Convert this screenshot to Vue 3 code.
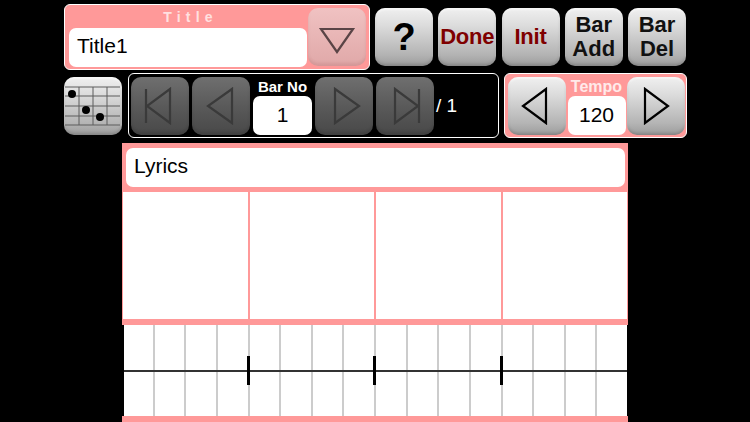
<template>
  <div class="screen">
    <div class="row row-top">
      <div class="title-panel">
        <div class="title-left">
          <div class="title-label">Title</div>
          <div class="field title-field">Title1</div>
        </div>
        <button class="btn btn-pink">
          <svg width="58" height="58" viewBox="0 0 58 58"><path d="M13 21 H45 L29 44 Z" class="tri dim" /></svg>
        </button>
      </div>
      <div class="actions">
        <button class="btn help">?</button>
        <button class="btn red">Done</button>
        <button class="btn red init">Init</button>
        <button class="btn two">Bar<br />Add</button>
        <button class="btn two">Bar<br />Del</button>
      </div>
    </div>

    <div class="row row-second">
      <button class="btn chord">
        <svg width="58" height="58" viewBox="0 0 58 58">
          <path v-for="y in chordRows" :key="y" :d="`M1 ${y} H56`" class="fret" />
          <path v-for="x in chordCols" :key="x" :d="`M${x} 10 V48`" class="fret" />
          <circle cx="8" cy="17" r="4" />
          <circle cx="22" cy="33" r="4" />
          <circle cx="36" cy="40" r="4" />
        </svg>
      </button>
      <div class="nav-panel">
        <button class="btn off">
          <svg width="58" height="58" viewBox="0 0 58 58"><path d="M15 12 V46 M39 12 V46 L16 29 Z" class="tri" /></svg>
        </button>
        <button class="btn off">
          <svg width="58" height="58" viewBox="0 0 58 58"><path d="M40 12 V46 L16 29 Z" class="tri" /></svg>
        </button>
        <div class="bar-no">
          <div class="small-label">Bar No</div>
          <div class="field num">1</div>
        </div>
        <button class="btn off">
          <svg width="58" height="58" viewBox="0 0 58 58"><path d="M20 12 V46 L44 29 Z" class="tri" /></svg>
        </button>
        <button class="btn off">
          <svg width="58" height="58" viewBox="0 0 58 58"><path d="M19 12 V46 L42 29 Z M43 12 V46" class="tri" /></svg>
        </button>
        <span class="total">/ 1</span>
      </div>
      <div class="tempo-panel">
        <button class="btn">
          <svg width="58" height="58" viewBox="0 0 58 58"><path d="M38 12 V46 L15 29 Z" class="tri dark" /></svg>
        </button>
        <div class="bar-no tempo">
          <div class="small-label">Tempo</div>
          <div class="field num">120</div>
        </div>
        <button class="btn">
          <svg width="58" height="58" viewBox="0 0 58 58"><path d="M18 12 V46 L41 29 Z" class="tri dark" /></svg>
        </button>
      </div>
    </div>

    <div class="sheet">
      <div class="lyrics-band">
        <div class="field lyrics">Lyrics</div>
      </div>
      <div class="cells">
        <div v-for="n in 4" :key="n" class="cell"></div>
      </div>
      <div class="staff">
        <div v-for="n in 16" :key="n" class="beat" :class="{ bar: n % 4 === 0 && n < 16 }"></div>
        <div class="mid-line"></div>
      </div>
    </div>
  </div>
</template>

<script setup>
const chordRows = [10, 19, 29, 39, 48]
const chordCols = [15, 29, 43]
</script>

<style>
html, body { margin: 0; background: #000; }
</style>

<style scoped>
.screen {
  width: 750px;
  height: 422px;
  overflow: hidden;
  background: #000;
  font-family: "Liberation Sans", Arial, sans-serif;
  padding-top: 4px;
  box-sizing: border-box;
}
.row {
  display: flex;
  margin-left: 64px;
}
.row-top { height: 66px; }
.row-second { height: 65px; margin-top: 3px; align-items: flex-start; }

.btn {
  width: 58px;
  height: 58px;
  flex: none;
  padding: 0;
  border: none;
  border-radius: 10px;
  background: linear-gradient(180deg, #f0f0f0 0%, #dcdcdc 30%, #b4b4b4 80%, #9c9c9c 100%);
  box-shadow: inset 0 -2px 3px rgba(0, 0, 0, 0.15), inset 0 2px 2px rgba(255, 255, 255, 0.5);
  font-family: inherit;
  font-weight: bold;
  color: #000;
  display: flex;
  align-items: center;
  justify-content: center;
}
.field {
  background: #fff;
  border-radius: 7px;
  color: #000;
  box-sizing: border-box;
}
.tri {
  fill: none;
  stroke: #3a3a3a;
  stroke-width: 2.2;
}
.tri.dim { stroke: #5a4446; }
.tri.dark { stroke: #000; }

.title-panel {
  width: 306px;
  height: 66px;
  box-sizing: border-box;
  background: #ff9999;
  border: 1px solid #fff;
  border-radius: 6px;
  display: flex;
  padding: 3px 3px 3px 4px;
  gap: 1px;
}
.title-left { width: 238px; }
.title-label {
  height: 20px;
  line-height: 18px;
  text-align: center;
  color: #ffe0e0;
  font-size: 14px;
  font-weight: bold;
  letter-spacing: 5.2px;
  padding-left: 5px;
}
.title-field {
  height: 39px;
  line-height: 36px;
  padding-left: 8px;
  font-size: 21px;
}
.btn-pink {
  background: linear-gradient(180deg, #f0c2c2 0%, #e0a8a8 100%);
  box-shadow: inset 0 -3px 3px rgba(120, 40, 40, 0.12);
}

.actions {
  display: flex;
  gap: 5.25px;
  margin-left: 5px;
  padding-top: 4px;
}
.help { font-size: 38px; }
.red { font-size: 22px; color: #7f0000; letter-spacing: -0.2px; }
.two { font-size: 22px; line-height: 24px; font-weight: bold; color: #111; }

.chord { margin-top: 4px; position: relative; }
.chord circle { fill: #000; }
.fret { stroke: #5c5c5c; stroke-width: 1; fill: none; }

.nav-panel {
  width: 371px;
  height: 65px;
  box-sizing: border-box;
  margin-left: 6px;
  border: 1px solid #fff;
  border-radius: 6px;
  display: flex;
  align-items: center;
  padding-left: 2px;
  gap: 3px;
}
.off {
  background: linear-gradient(180deg, #6f6f6f 0%, #5a5a5a 50%, #484848 100%);
  box-shadow: inset 0 -3px 3px rgba(0, 0, 0, 0.12);
}
.bar-no {
  width: 59px;
  height: 58px;
  display: flex;
  flex-direction: column;
  align-items: center;
}
.small-label {
  height: 19px;
  line-height: 19px;
  font-size: 15px;
  font-weight: bold;
  color: #fff;
}
.num {
  width: 59px;
  height: 39px;
  line-height: 38px;
  text-align: center;
  font-size: 21px;
}
.total {
  color: #fff;
  font-size: 19px;
  margin-left: -1px;
}

.tempo-panel {
  width: 183px;
  height: 65px;
  box-sizing: border-box;
  margin-left: 5px;
  background: #ff9999;
  border: 1px solid #fff;
  border-radius: 6px;
  display: flex;
  align-items: center;
  padding-left: 3px;
  gap: 1px;
}
.tempo .small-label { color: #ffeaea; font-size: 16px; }
.tempo { width: 59px; }
.tempo .num { width: 58px; }

.sheet {
  width: 506px;
  margin: 5px 0 0 122px;
  background: #ff9999;
  box-sizing: border-box;
  padding: 0 1px 6px;
}
.lyrics-band {
  height: 49px;
  box-sizing: border-box;
  padding: 5px 2px 0 3px;
}
.lyrics {
  height: 39px;
  line-height: 36px;
  padding-left: 8px;
  font-size: 21px;
}
.cells {
  display: grid;
  grid-template-columns: repeat(4, 1fr);
  gap: 2px;
  height: 127px;
}
.cell { background: #fff; }
.staff {
  margin: 6px -1px 0;
  height: 91px;
  background: #fff;
  display: grid;
  grid-template-columns: repeat(16, 1fr);
  position: relative;
  box-shadow: inset 2px 0 0 #000, inset -1px 0 0 #000;
}
.beat { position: relative; }
.beat::before {
  content: "";
  position: absolute;
  top: 0;
  bottom: 0;
  right: -1px;
  width: 2px;
  background: #cccccc;
}
.beat:nth-of-type(16)::before { display: none; }
.bar::after {
  content: "";
  position: absolute;
  right: -1px;
  top: 31px;
  width: 3px;
  height: 29px;
  background: #000;
  z-index: 1;
}
.mid-line {
  position: absolute;
  left: 2px;
  right: 1px;
  top: 45px;
  height: 2px;
  background: #333;
}
</style>
